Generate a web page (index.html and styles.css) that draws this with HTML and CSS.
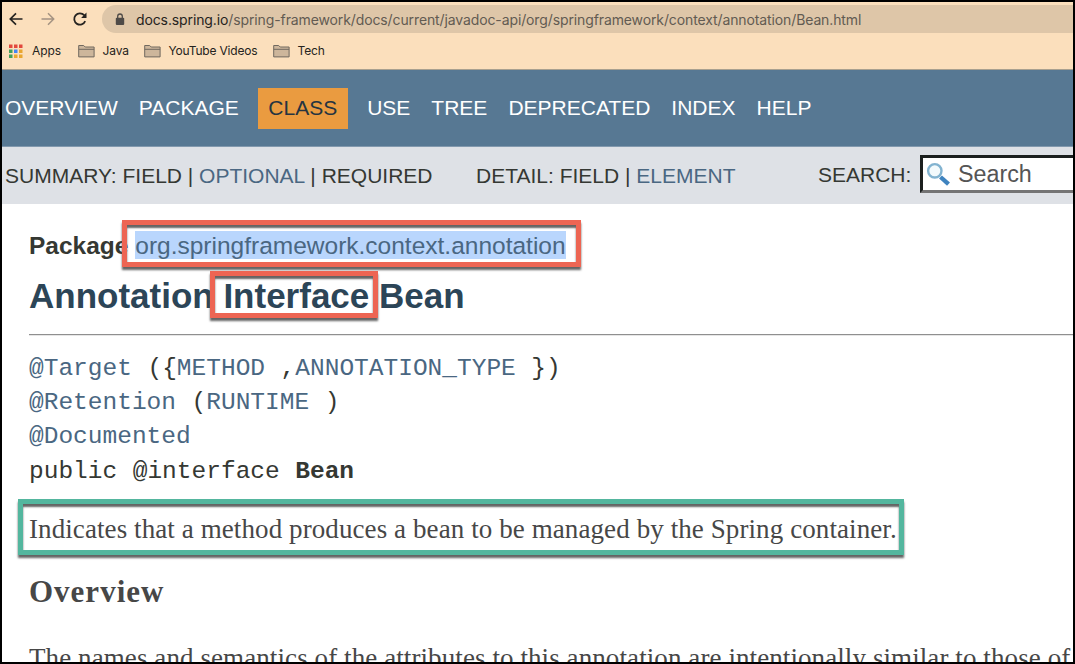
FILE: index.html
```html
<!DOCTYPE html>
<html lang="en">
<head>
<meta charset="utf-8">
<title>Bean (Spring Framework API)</title>
<link rel="stylesheet" href="styles.css">
</head>
<body>
<div class="window">
  <header class="chrome">
    <div class="toolbar">
      <svg class="nav-icon" width="16" height="16" viewBox="0 0 16 16"><path d="M14.5 8H2.5M8 2.3 2.3 8 8 13.7" fill="none" stroke="#252320" stroke-width="1.7"/></svg>
      <svg class="nav-icon" width="16" height="16" viewBox="0 0 16 16"><path d="M1.5 8h12M8 2.3 13.7 8 8 13.7" fill="none" stroke="#a49382" stroke-width="1.5"/></svg>
      <svg class="nav-icon" width="16" height="16" viewBox="0 0 16 16"><path d="M13.2 10.2A5.7 5.7 0 1 1 12.2 4.2L13.6 5.7" fill="none" stroke="#252320" stroke-width="1.8"/><path d="M14.5 1.6V7H9.1Z" fill="#252320"/></svg>
      <div class="address">
        <svg class="lock" width="10" height="13" viewBox="0 0 10 13"><rect x="0.8" y="4.7" width="8.4" height="7.3" rx="1" fill="#4e4a47"/><path d="M2.7 5V3.3a2.3 2.3 0 0 1 4.6 0V5" fill="none" stroke="#4e4a47" stroke-width="1.3"/></svg>
        <span class="url"><span class="host">docs.spring.io</span>/spring-framework/docs/current/javadoc-api/org/springframework/context/annotation/Bean.html</span>
      </div>
    </div>
    <div class="bookmarks">
      <span class="bookmark apps"><svg width="14" height="14" viewBox="0 0 14 14"><path d="M0 .5h3.5V4H0zM5 .5h3.5V4H5zM10 .5h3.5V4H10z" fill="#e2483d"/><path d="M0 5.5h3.5V9H0zM0 10.5h3.5V14H0z" fill="#42a05a"/><path d="M5 5.5h3.5V9H5z" fill="#4285f4"/><path d="M10 5.5h3.5V9H10zM5 10.5h3.5V14H5zM10 10.5h3.5V14H10z" fill="#e9a62e"/></svg>Apps</span>
      <span class="bookmark java"><svg width="17" height="14" viewBox="0 0 17 14"><path d="M.7 12.9V1.5h5l1.5 1.5h8.9v9.9zM.7 5.3h15.4" fill="#cdb69b" stroke="#71695f"/></svg>Java</span>
      <span class="bookmark videos"><svg width="17" height="14" viewBox="0 0 17 14"><path d="M.7 12.9V1.5h5l1.5 1.5h8.9v9.9zM.7 5.3h15.4" fill="#cdb69b" stroke="#71695f"/></svg>YouTube Videos</span>
      <span class="bookmark tech"><svg width="17" height="14" viewBox="0 0 17 14"><path d="M.7 12.9V1.5h5l1.5 1.5h8.9v9.9zM.7 5.3h15.4" fill="#cdb69b" stroke="#71695f"/></svg>Tech</span>
    </div>
  </header>
  <nav class="top-nav">
    <span>OVERVIEW</span><span>PACKAGE</span><span class="current">CLASS</span><span>USE</span><span>TREE</span><span>DEPRECATED</span><span>INDEX</span><span>HELP</span>
  </nav>
  <div class="sub-nav">
    <span class="summary">SUMMARY: FIELD | <a>OPTIONAL</a> | REQUIRED</span>
    <span class="detail">DETAIL: FIELD | <a>ELEMENT</a></span>
    <span class="search-label">SEARCH:</span>
    <div class="search"><svg width="25" height="25" viewBox="0 0 25 25"><path d="m14.5 15 8 7.2" stroke="#3f83bf" stroke-width="4.3"/><circle cx="8.8" cy="8.8" r="6.7" fill="#f3fafc" stroke="#82b3d0" stroke-width="2.4"/></svg>Search</div>
  </div>
  <main class="content">
    <div class="package"><b>Package</b> <a class="selected">org.springframework.context.annotation</a></div>
    <h1>Annotation Interface Bean</h1>
    <hr>
    <pre class="signature"><a>@Target</a> ({<a>METHOD</a> ,<a>ANNOTATION_TYPE</a> })
<a>@Retention</a> (<a>RUNTIME</a> )
<a>@Documented</a>
public @interface <b>Bean</b></pre>
    <p class="lead">Indicates that a method produces a bean to be managed by the Spring container.</p>
    <h2>Overview</h2>
    <p class="body-text">The names and semantics of the attributes to this annotation are intentionally similar to those of</p>
  </main>
  <div class="mark mark-package"></div>
  <div class="mark mark-interface"></div>
  <div class="mark mark-lead"></div>
</div>
</body>
</html>
```
FILE: styles.css
```css
* { box-sizing: border-box; }
body { margin: 0; }
.window {
  position: relative;
  width: 1075px;
  height: 664px;
  border: 2px solid #000;
  overflow: hidden;
  background: #fff;
  color: #353833;
  font-family: "Liberation Sans", Arial, sans-serif;
  white-space: nowrap;
}
a { color: #4a6782; }

/* Browser chrome */
.chrome {
  height: 68px;
  padding-top: 3px;
  background: #fbdfbc;
  border-bottom: 1px solid #a8a08f;
  color: #252320;
  font-family: Inter, sans-serif;
}
.toolbar { display: flex; align-items: center; height: 28px; padding-left: 6px; }
.nav-icon { margin-right: 16px; }
.address {
  display: flex;
  align-items: center;
  flex: 1;
  height: 28px;
  margin-left: -2px;
  padding-left: 13px;
  border-radius: 14px 0 0 14px;
  background: #dec6a8;
}
.lock { margin-right: 11px; }
.url { font-size: 14px; letter-spacing: -0.115px; color: #625b52; }
.host { color: #252320; }
.bookmarks { display: flex; align-items: center; height: 35px; padding-left: 7px; font-size: 12px; letter-spacing: -0.1px; }
.bookmark { display: flex; align-items: center; gap: 7.5px; }
.apps { width: 69px; gap: 9px; }
.java { width: 66px; }
.videos { width: 129px; letter-spacing: -0.2px; }

/* Documentation navigation */
.top-nav {
  display: flex;
  align-items: center;
  height: 77px;
  padding-left: 3px;
  gap: 21px;
  background: #577893;
  border-bottom: 1px solid #8299ae;
  color: #fff;
  font-size: 21px;
}
.current {
  margin: 0 -1.5px 0 -2px;
  padding: 0 10.5px;
  height: 41px;
  line-height: 40px;
  background: #ea9b40;
  color: #253441;
}
.sub-nav {
  display: flex;
  align-items: center;
  height: 57px;
  padding-left: 3px;
  background: #dee1e6;
  font-size: 21px;
}
.sub-nav > * { flex-shrink: 0; }
.summary { width: 471px; }
.detail { width: 342px; }
.search-label { width: 102px; margin-top: -2px; }
.search {
  display: flex;
  align-items: center;
  gap: 7px;
  width: 180px;
  height: 38px;
  margin-top: -3px;
  padding-left: 3px;
  border: 3px solid #747474;
  border-top-color: #1b1f1e;
  border-left-color: #1b1f1e;
  background: #fff;
  color: #555;
  font-size: 23.3px;
}

/* Page body */
.content { padding: 27px 0 0 27px; }
.package { height: 32px; font-size: 24.5px; line-height: 29px; }
.selected { display: inline-block; height: 28px; background: #b9d6fd; }
h1 { margin: 13px 0 0; color: #2c4557; font-size: 35px; line-height: 40px; }
hr { margin: 18px 0 0; border: 0; border-top: 1px solid #8f8f8f; border-bottom: 1px solid #e6e6e6; }
.signature {
  margin: 16px 0 0;
  font: 24.5px/34.2px "Liberation Mono", monospace;
  word-spacing: 0.8px;
}
.lead, .body-text, h2 { margin: 0; color: #474747; font-family: "Liberation Serif", serif; }
.lead, .body-text { font-size: 27px; line-height: 30px; letter-spacing: 0.09px; }
.lead { margin-top: 25px; }
h2 { margin-top: 31px; font-size: 31px; line-height: 34px; letter-spacing: 1px; }
.body-text { margin-top: 34px; }

/* Highlight frames drawn over the page */
.mark {
  position: absolute;
  border: 5px solid #ed6553;
  box-shadow: 0 3px 2px #646464, inset 0 3px 2px #646464;
}
.mark-package { left: 120px; top: 218px; width: 459px; height: 47px; }
.mark-interface { left: 208px; top: 269px; width: 168px; height: 47px; }
.mark-lead { left: 16px; top: 497px; width: 886px; height: 56px; border-color: #53b69e; }
```
